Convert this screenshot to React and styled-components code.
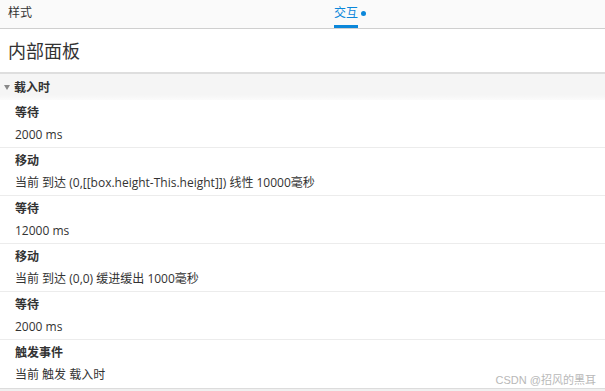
import React from "react";
import styled, { createGlobalStyle } from "styled-components";

const Global = createGlobalStyle`
  html, body { margin: 0; padding: 0; background: #fff; }
  body { font-family: "Open Sans", "Noto Sans CJK SC", sans-serif; color: #333; }
  * { box-sizing: border-box; }
`;

const Page = styled.div`
  position: relative;
  width: 605px;
  height: 391px;
  overflow: hidden;
  background: #f0f0f0;
`;

const TabBar = styled.div`
  height: 29px;
  background: #fafafa;
  border-bottom: 1px solid #cfcfcf;
  display: flex;
  align-items: stretch;
  position: relative;
`;

const Tab = styled.div`
  position: absolute;
  left: ${(p) => p.$left}px;
  top: 0;
  height: 28px;
  display: flex;
  align-items: flex-start;
  padding-top: 5px;
  font-size: 12px;
  line-height: 16px;
  color: ${(p) => (p.$active ? "#0b87da" : "#333")};
`;

const TabLabel = styled.span`
  position: relative;
  display: inline-block;
  height: 23px;
  border-bottom: ${(p) => (p.$active ? "3px solid #0b87da" : "none")};
`;

const Dot = styled.span`
  width: 5px;
  height: 5px;
  border-radius: 50%;
  background: #0b87da;
  margin: 6px 0 0 3px;
`;

const TitleArea = styled.div`
  height: 43px;
  background: #fff;
  padding-left: 8px;
  display: flex;
  align-items: center;
  font-size: 18px;
  color: #333;
  padding-bottom: 1px;
`;

const SectionHeader = styled.div`
  height: 28px;
  border-top: 2px solid #dedede;
  background: linear-gradient(#f5f5f5, #f5f5f5 80%, #fbfbfb);
  display: flex;
  align-items: center;
  padding-left: 4px;
  padding-bottom: 1px;
  font-size: 12px;
  font-weight: bold;
  color: #333;
`;

const Caret = styled.span`
  width: 0;
  height: 0;
  border-left: 3px solid transparent;
  border-right: 3px solid transparent;
  border-top: 5px solid #888;
  margin-right: 4px;
  margin-top: 1px;
`;

const List = styled.div`
  background: #fff;
  border-bottom: 1px solid #dcdcdc;
`;

const Row = styled.div`
  height: 48px;
  padding: 3px 15px 0;
  border-bottom: ${(p) => (p.$last ? "none" : "1px solid #ececec")};
`;

const RowTitle = styled.div`
  font-size: 12px;
  line-height: 20px;
  font-weight: bold;
  color: #333;
`;

const RowValue = styled.div`
  font-size: 12px;
  line-height: 24px;
  color: #333;
`;

const Watermark = styled.div`
  position: absolute;
  right: 9px;
  bottom: 4px;
  font-size: 11px;
  color: #b8b8b8;
  font-family: "Liberation Sans", "Noto Sans CJK SC", sans-serif;
`;

const rows = [
  ["等待", "2000 ms"],
  ["移动", "当前 到达 (0,[[box.height-This.height]]) 线性 10000毫秒"],
  ["等待", "12000 ms"],
  ["移动", "当前 到达 (0,0) 缓进缓出 1000毫秒"],
  ["等待", "2000 ms"],
  ["触发事件", "当前 触发 载入时"],
];

export default function App() {
  return (
    <Page>
      <Global />
      <TabBar>
        <Tab $left={8}>
          <TabLabel>样式</TabLabel>
        </Tab>
        <Tab $left={334} $active>
          <TabLabel $active>交互</TabLabel>
          <Dot />
        </Tab>
      </TabBar>
      <TitleArea>内部面板</TitleArea>
      <SectionHeader>
        <Caret />
        载入时
      </SectionHeader>
      <List>
        {rows.map(([t, v], i) => (
          <Row key={i} $last={i === rows.length - 1}>
            <RowTitle>{t}</RowTitle>
            <RowValue>{v}</RowValue>
          </Row>
        ))}
      </List>
      <Watermark>CSDN @招风的黑耳</Watermark>
    </Page>
  );
}
